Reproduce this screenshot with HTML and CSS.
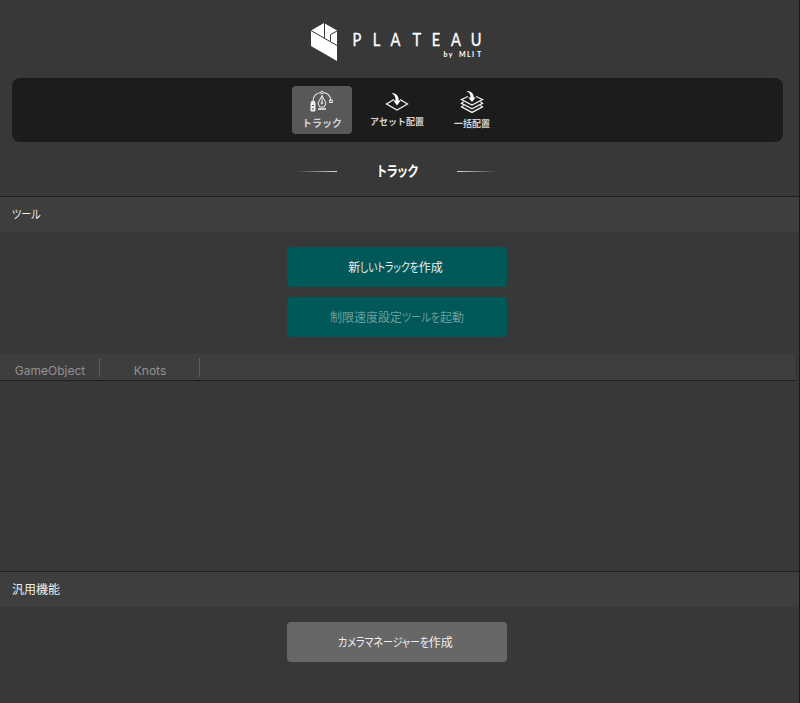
FILE: index.html
```html
<!DOCTYPE html>
<html lang="ja">
<head>
<meta charset="utf-8">
<title>PLATEAU</title>
<link rel="stylesheet" href="styles.css">
</head>
<body>
<div class="window">
  <header class="brand">
    <svg class="logo" width="176" height="40" viewBox="310 22 176 40">
      <path fill="#fff" d="M324 23L337 30.5V61L311 46V30.5Z"/>
      <path fill="none" stroke="#383838" d="M311 30.5L337 45.5M324.5 23V38M337 31L330.5 34.5V41"/>
      <g class="wordmark" transform="scale(.86 1)">
        <text x="410 433.5 454 479.7 501.9 524.4 547.4" y="46">PLATEAU</text>
      </g>
      <text class="byline" x="443.5 448.7 455 459 467 472 477" y="57">by MLIT</text>
    </svg>
  </header>
  <nav class="tabs">
    <button class="tab active">
      <svg width="28" height="24" viewBox="308.5 89 28 24" fill="none" stroke="#eee">
        <path d="M313.5 101C313.5 96 317 92.5 322.5 92.5S331 96 331.5 101" stroke-width="1.1"/>
        <circle cx="322.5" cy="92.5" r="1.3" fill="#585858"/>
        <rect x="330.2" y="100" width="2.5" height="2.5"/>
        <path d="M311.5 103.5L312 101.5H315L315.5 103.5V111H311.5Z" fill="#eee"/>
        <path d="M312.5 105.5H314.5M312.5 109H314.5" stroke="#555"/>
        <path d="M322.5 95.5L326.5 103L324.8 107H320.2L318.5 103ZM322.5 95.5V102"/>
        <circle cx="322.5" cy="103" r="1"/>
        <path d="M318.5 109H326.5" stroke-width="1.6"/>
      </svg>
      <span class="tab-label">トラック</span>
    </button>
    <button class="tab asset">
      <svg width="24" height="22" viewBox="385 91 24 22">
        <path fill="none" stroke="#eee" stroke-width="1.3" d="M394 99.5L386.5 104L397 110L407.5 104L400 99.5"/>
        <path fill="#fff" d="M391.5 93C396 93 399 96 398.7 100.5H400.7L397 105.5L393.3 100.5H395.5C395.7 97 394.5 94.8 391.5 93Z"/>
      </svg>
      <span class="tab-label">アセット配置</span>
    </button>
    <button class="tab batch">
      <svg width="24" height="24" viewBox="460 90 24 24">
        <path fill="none" stroke="#eee" stroke-width="1.3" d="M468 96.5L461.5 99.5L472 105L482.5 99.5L476 96.5M463.5 101.8L461.5 103.3L472 108.8L482.5 103.3L480.5 101.8M463.5 105.4L461.5 106.9L472 112.4L482.5 106.9L480.5 105.4"/>
        <path fill="#fff" d="M466.5 91C471 91 474 93.5 473.7 97.5H475.7L472 102L468.3 97.5H470.5C470.7 94.5 469.5 92.5 466.5 91Z"/>
      </svg>
      <span class="tab-label">一括配置</span>
    </button>
  </nav>
  <div class="title"><i class="rule left"></i><h1><span class="kana">トラック</span></h1><i class="rule right"></i></div>
  <h2 class="section"><span class="kana">ツール</span></h2>
  <div class="actions">
    <button class="btn create">新<span class="kana">しいトラックを</span>作成</button>
    <button class="btn disabled">制限速度設定<span class="kana">ツールを</span>起動</button>
  </div>
  <div class="table-head"><span>GameObject</span><span>Knots</span></div>
  <div class="table-body"></div>
  <h2 class="section">汎用機能</h2>
  <div class="actions">
    <button class="btn grey"><span class="kana">カメラマネージャーを</span>作成</button>
  </div>
</div>
</body>
</html>
```
FILE: styles.css
```css
* { box-sizing: border-box; }
body {
  margin: 0;
  background: #383838;
  color: #eee;
  font-family: Inter, "Noto Sans CJK JP", sans-serif;
  font-size: 12px;
}
.window { height: 703px; border-right: 1px solid #191919; overflow: hidden; }
.brand { height: 78px; padding: 22px 0 0 310px; }
.logo { display: block; }
.wordmark { font: 17px Lato, sans-serif; fill: #fff; stroke: #fff; stroke-width: .35; }
.byline { font: bold 7px Lato, sans-serif; fill: #fff; white-space: pre; }
button { border: 0; padding: 0; color: inherit; font: inherit; }
.tabs {
  width: 771px;
  height: 64px;
  margin-left: 12px;
  padding: 8px 1px 0 0;
  display: flex;
  justify-content: center;
  gap: 15px;
  background: #1c1c1c;
  border-radius: 8px;
}
.tab {
  width: 60px;
  height: 48px;
  padding-top: 3px;
  display: flex;
  flex-direction: column;
  align-items: center;
  background: none;
  border-radius: 4px;
}
.tab.active { background: #585858; }
.tab svg { flex: none; }
.tab-label {
  font-size: 10px;
  font-weight: 700;
  line-height: 14px;
  margin-top: 3px;
  white-space: nowrap;
  color: #d4d4d4;
}
.asset { padding-top: 5px; }
.asset .tab-label, .batch .tab-label { font-size: 9px; margin-top: 2px; }
.batch { padding-top: 4px; }
.batch .tab-label { margin-top: 3px; }
.title {
  width: 794px;
  height: 54px;
  display: flex;
  justify-content: center;
  align-items: center;
  gap: 40px;
}
.kana {
  display: inline-block;
  transform: scaleX(.84);
  transform-origin: left;
}
h1 {
  margin: 3px 0 0;
  width: 40px;
  font-size: 14px;
  line-height: 20px;
  font-weight: 700;
  font-feature-settings: "palt";
  color: #fff;
  white-space: nowrap;
}
.rule { width: 40px; height: 1px; margin-top: 5px; }
.left { background: linear-gradient(to right, transparent, #ddd); }
.right { background: linear-gradient(to left, transparent, #ddd); }
.section {
  margin: 0;
  height: 36px;
  padding-left: 12px;
  border-top: 1px solid #1f1f1f;
  background: #3e3e3e;
  font-size: 12px;
  line-height: 35px;
  font-weight: 400;
  font-feature-settings: "palt";
}
.actions {
  width: 794px;
  padding-top: 15px;
  display: flex;
  flex-direction: column;
  align-items: center;
  gap: 10px;
}
.btn {
  width: 220px;
  height: 40px;
  padding: 0 3px 2px 0;
  border-radius: 4px;
  background: #005858;
  font-feature-settings: "palt";
  white-space: nowrap;
}
.create .kana { transform: scaleX(.81); margin-right: -14px; }
.disabled { color: #6d9e9e; padding-right: 0; }
.disabled .kana { margin-right: -7px; }
.grey { background: #676767; }
.grey .kana { transform: scaleX(.83); margin-right: -19px; }
.table-head {
  width: 795px;
  height: 27px;
  margin-top: 17px;
  padding-top: 4px;
  display: flex;
  background: #3e3e3e;
  border-bottom: 1px solid #1f1f1f;
}
.table-head span {
  width: 100px;
  height: 19px;
  padding-left: 1px;
  line-height: 25px;
  text-align: center;
  border-right: 1px solid #5c5c5c;
  color: #929292;
}
.table-body { height: 190px; }
```
